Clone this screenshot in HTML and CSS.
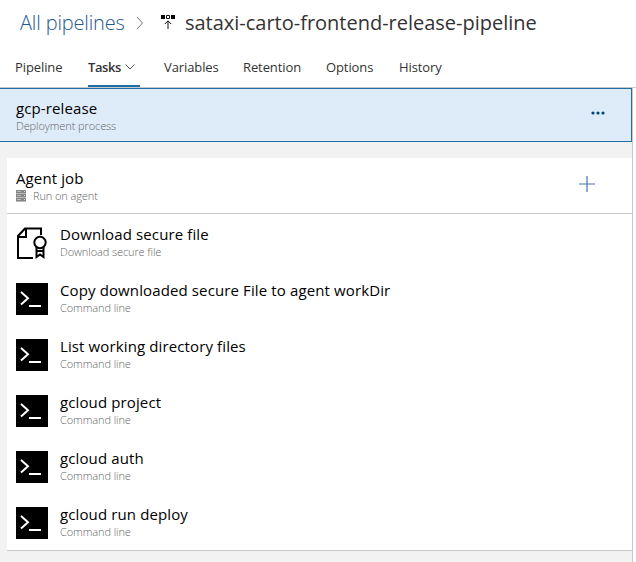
FILE: index.html
```html
<!DOCTYPE html>
<html lang="en">
<head>
<meta charset="utf-8">
<title>sataxi-carto-frontend-release-pipeline</title>
<link rel="stylesheet" href="styles.css">
</head>
<body>
<svg class="defs" width="0" height="0">
  <symbol id="cmd" viewBox="0 0 32 32"><path d="M0 0h32v32H0z"/><path d="M5 9l7 6.300-7 6.300M13 23h12" fill="none" stroke="#fff" stroke-width="2"/></symbol>
</svg>
<header class="header">
  <div class="crumbs">
    <a class="crumb-link"><span>All pipelines</span></a>
    <svg class="crumb-sep" width="8" height="14" viewBox="0 0 8 14"><path d="M1 1l5.500 6L1 13" fill="none" stroke="#777" stroke-width="1"/></svg>
    <svg class="crumb-icon" width="14" height="15" viewBox="0 0 14 15"><path d="M0 0h4v4H0zM10 0h4v4h-4z"/><path d="M5.500.500h3v3h-3zM7 14V6M3.800 9L7 5.800 10.200 9" fill="none" stroke="#111"/></svg>
    <h1 class="crumb-title"><span>sataxi-carto-frontend-release-pipeline</span></h1>
  </div>
  <nav class="tabs">
    <a class="tab tab-pipeline"><span>Pipeline</span></a>
    <a class="tab tab-tasks"><span>Tasks</span><svg width="10" height="6" viewBox="0 0 10 6"><path d="M.500.500L5 5 9.500.500" fill="none" stroke="#555"/></svg></a>
    <a class="tab tab-variables"><span>Variables</span></a>
    <a class="tab tab-retention"><span>Retention</span></a>
    <a class="tab tab-options"><span>Options</span></a>
    <a class="tab tab-history"><span>History</span></a>
  </nav>
</header>
<main class="panel">
  <section class="process">
    <div><div class="name">gcp-release</div><div class="sub">Deployment process</div></div>
    <svg class="more" width="14" height="4" viewBox="0 0 14 4" fill="#004578"><circle cx="2" cy="2" r="1.600"/><circle cx="7" cy="2" r="1.600"/><circle cx="12" cy="2" r="1.600"/></svg>
  </section>
  <section class="card">
    <div class="job">
      <div><div class="name">Agent job</div>
      <div class="sub job-sub"><svg width="10" height="12" viewBox="0 0 10 12"><path d="M0 1.500h10M0 5.500h10M0 9.500h10" stroke="#858585" stroke-width="3"/><path d="M1 1.500h4M1 5.500h4M1 9.500h4" stroke="#bbb"/><path d="M8 1h1v1H8zM8 5h1v1H8zM8 9h1v1H8z" fill="#ddd"/><path d="M0 3.500h10M0 7.500h10M0 11.500h10" stroke="#bbb"/></svg><span>Run on agent</span></div></div>
      <svg class="add" width="16" height="16" viewBox="0 0 16 16"><path d="M0 8h16M8 0v16" stroke="#4873ad" stroke-width="1.200"/></svg>
    </div>
    <div class="task"><svg class="icon" width="32" height="32" viewBox="0 0 32 32" fill="none" stroke="#000" stroke-width="2"><path d="M17 31H2V9L9 1.500h16V8M2 10h8V1.500"/><circle cx="24" cy="15.500" r="5.700"/><path d="M20.500 20v10l3.500-2.500 3.500 2.500V20M20.500 24h7"/></svg><div><div class="name">Download secure file</div><div class="sub">Download secure file</div></div></div>
    <div class="task"><svg class="icon" width="32" height="32"><use href="#cmd"/></svg><div><div class="name">Copy downloaded secure File to agent workDir</div><div class="sub">Command line</div></div></div>
    <div class="task"><svg class="icon" width="32" height="32"><use href="#cmd"/></svg><div><div class="name">List working directory files</div><div class="sub">Command line</div></div></div>
    <div class="task"><svg class="icon" width="32" height="32"><use href="#cmd"/></svg><div><div class="name">gcloud project</div><div class="sub">Command line</div></div></div>
    <div class="task"><svg class="icon" width="32" height="32"><use href="#cmd"/></svg><div><div class="name">gcloud auth</div><div class="sub">Command line</div></div></div>
    <div class="task"><svg class="icon" width="32" height="32"><use href="#cmd"/></svg><div><div class="name">gcloud run deploy</div><div class="sub">Command line</div></div></div>
  </section>
</main>
</body>
</html>
```
FILE: styles.css
```css
* { box-sizing: border-box; }
body { margin: 0; height: 562px; overflow: hidden; background: #fff; font-family: "Open Sans", "Noto Sans", sans-serif; color: #000; white-space: nowrap; }
svg { display: block; flex: none; }
.defs { position: absolute; }
.header { height: 88px; border-bottom: 1px solid #c8c8c8; }
.crumbs { display: flex; height: 47px; padding-left: 20px; }
.crumb-link { width: 116px; font-size: 20px; line-height: 46px; font-weight: 300; color: #245a8c; letter-spacing: -0.15px; }
.crumb-sep { margin-top: 16px; }
.crumb-icon { margin: 15px 0 0 17px; }
.crumb-title { margin: 0 0 0 10px; font-size: 20px; line-height: 45px; font-weight: 400; color: #333; letter-spacing: -0.01px; }
.tabs { display: flex; height: 40px; padding-left: 15px; font-size: 13px; line-height: 40px; color: #333; }
.tab { display: block; letter-spacing: -0.1px; }
.tab-pipeline { width: 73px; }
.tab-tasks { display: flex; align-items: center; justify-content: space-between; width: 52px; margin-right: 24px; padding: 2px 5px 0 0; border-bottom: 2px solid #1f6ea6; line-height: 38px; font-weight: 600; letter-spacing: -0.4px; }
.tab-variables { width: 79px; }
.tab-retention { width: 83px; }
.tab-options { width: 73px; }
.panel { width: 633px; height: 474px; background: #f2f2f2; border-right: 1px solid #c8c8c8; }
.process { display: flex; justify-content: space-between; height: 54px; padding: 9px 26px 0 16px; background: #deecf9; border: 1px solid #1f6ea6; border-left: 0; }
.name { font-size: 15px; line-height: 20px; letter-spacing: 0.12px; }
.sub { font-size: 11px; line-height: 15px; font-weight: 300; color: #666; letter-spacing: -0.1px; }
.more { margin-top: 13px; }
.card { margin: 16px 0 0 7px; height: 393px; background: #fff; border-bottom: 1px solid #c8c8c8; }
.job { display: flex; justify-content: space-between; height: 56px; padding: 10px 37px 0 9px; border-bottom: 1px solid #c8c8c8; }
.job-sub { display: flex; align-items: center; gap: 7px; }
.add { margin-top: 8px; }
.task { display: flex; height: 56px; padding: 10px 0 0 9px; gap: 12px; }
.icon { margin-top: 3px; }
```
